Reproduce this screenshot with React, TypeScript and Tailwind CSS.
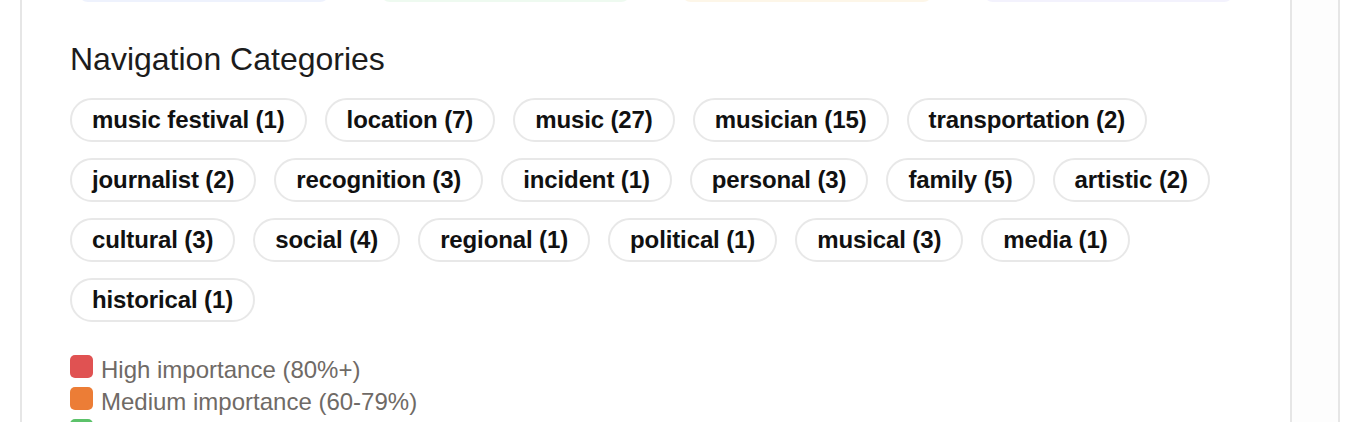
import React from "react";

interface ICategory {
  name: string;
  count: number;
}

const categories: Array<ICategory> = [
  { name: "music festival", count: 1 },
  { name: "location", count: 7 },
  { name: "music", count: 27 },
  { name: "musician", count: 15 },
  { name: "transportation", count: 2 },
  { name: "journalist", count: 2 },
  { name: "recognition", count: 3 },
  { name: "incident", count: 1 },
  { name: "personal", count: 3 },
  { name: "family", count: 5 },
  { name: "artistic", count: 2 },
  { name: "cultural", count: 3 },
  { name: "social", count: 4 },
  { name: "regional", count: 1 },
  { name: "political", count: 1 },
  { name: "musical", count: 3 },
  { name: "media", count: 1 },
  { name: "historical", count: 1 },
];

const legend = [
  { label: "High importance (80%+)", color: "bg-[#e05252]" },
  { label: "Medium importance (60-79%)", color: "bg-[#ec7d36]" },
  { label: "Low importance (below 60%)", color: "bg-[#5cc26a]" },
];

const cards = ["bg-[#eef2fd]", "bg-[#eefaf0]", "bg-[#fdf6e8]", "bg-[#f3f2fd]"];

export default function App() {
  return (
    <div className="flex h-[422px] overflow-hidden bg-white font-['Liberation_Sans',Arial,sans-serif]">
      <div className="ml-[20px] w-[1272px] shrink-0 border-x-2 border-[#e6e6e6] pl-[48px] pr-[56px]">
        {/* stat cards, only their bottom edges show */}
        <div className="-mt-[40px] flex gap-[50px] pl-[8px]">
          {cards.map((c) => (
            <div key={c} className={`h-[42px] w-[252px] rounded-[10px] ${c}`} />
          ))}
        </div>

        <h2 className="mt-[39px] text-[32px] leading-[36px] text-[#1c1c1c]">Navigation Categories</h2>

        <div className="mt-[21px] flex flex-wrap gap-x-[18px] gap-y-[16px]">
          {categories.map((item) => (
            <span
              key={item.name}
              className="rounded-full border-2 border-[#e8e8e8] px-[20px] py-[8px] text-[24px] font-bold leading-[24px] tracking-[-0.12px] text-[#111]"
            >
              {item.name} ({item.count})
            </span>
          ))}
        </div>

        <div className="mt-[32px] flex flex-col">
          {legend.map((l) => (
            <div key={l.label} className="flex h-[32px] items-start gap-[8px]">
              <span className={`mt-[1px] h-[23px] w-[23px] rounded-[5px] ${l.color}`} />
              <span className="text-[24px] leading-[32px] text-[#6f6a66]">{l.label}</span>
            </div>
          ))}
        </div>
      </div>
      <div className="w-[46px] shrink-0 bg-[#fdfdfd]" />
      <div className="w-[2px] shrink-0 bg-[#e6e6e6]" />
    </div>
  );
}
